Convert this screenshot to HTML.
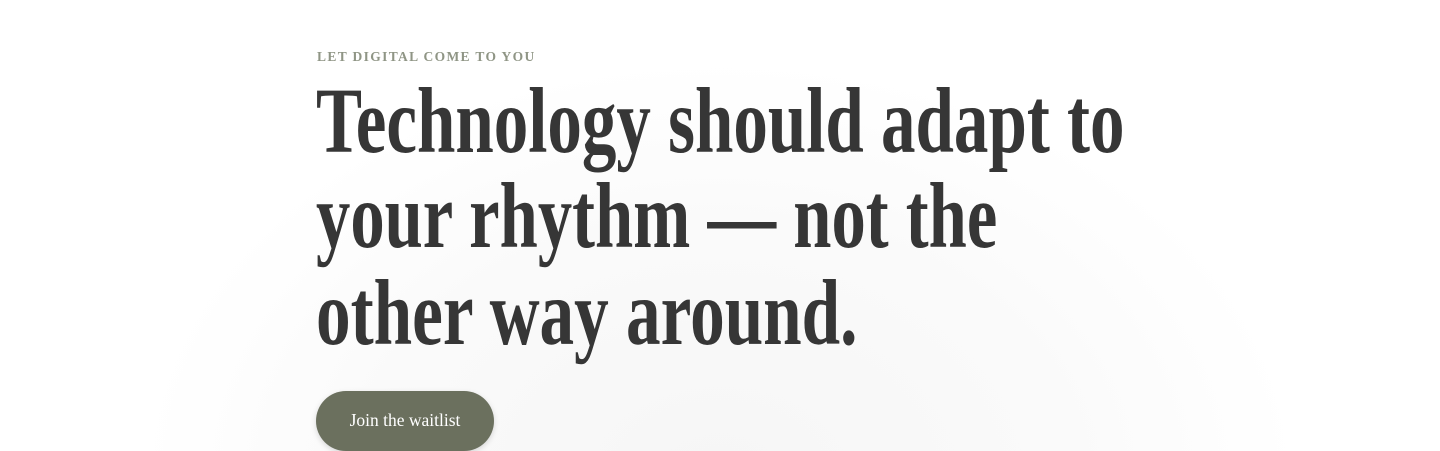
<!DOCTYPE html>
<html><head><style>
html,body{margin:0;padding:0;width:1440px;height:451px;overflow:hidden;background:#fff;}
body{position:relative;font-family:"Liberation Serif",serif;
background:radial-gradient(ellipse 580px 420px at 720px 480px,#f6f6f6 0%,#fafafa 60%,#fff 100%);}
.eb{position:absolute;left:317px;top:49px;font-size:13.5px;font-weight:bold;letter-spacing:1.35px;color:#8f9585;}
.l{position:absolute;left:316px;font-size:93px;font-weight:bold;color:#363636;white-space:nowrap;transform-origin:0 0;line-height:1;}
.btn{position:absolute;left:316px;top:391px;width:178px;height:60px;border-radius:30px;background:#6b705e;color:#fff;font-size:17.5px;text-align:center;line-height:58px;box-shadow:0 2px 6px rgba(0,0,0,.15);}
</style></head><body>
<div class="eb">LET DIGITAL COME TO YOU</div>
<div class="l" style="top:75px;transform:scaleX(0.742)">Technology should adapt to</div>
<div class="l" style="top:170px;transform:scaleX(0.738)">your rhythm — not the</div>
<div class="l" style="top:267px;transform:scaleX(0.744)">other way around.</div>
<div class="btn">Join the waitlist</div>
</body></html>
